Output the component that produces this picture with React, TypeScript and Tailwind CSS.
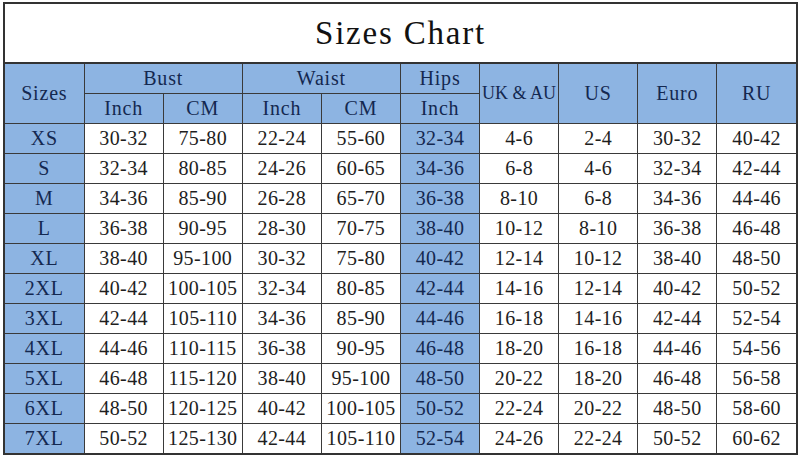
import React from "react"

// --------------------
// Size data
// --------------------
const rows: string[][] = [
  ["XS", "30-32", "75-80", "22-24", "55-60", "32-34", "4-6", "2-4", "30-32", "40-42"],
  ["S", "32-34", "80-85", "24-26", "60-65", "34-36", "6-8", "4-6", "32-34", "42-44"],
  ["M", "34-36", "85-90", "26-28", "65-70", "36-38", "8-10", "6-8", "34-36", "44-46"],
  ["L", "36-38", "90-95", "28-30", "70-75", "38-40", "10-12", "8-10", "36-38", "46-48"],
  ["XL", "38-40", "95-100", "30-32", "75-80", "40-42", "12-14", "10-12", "38-40", "48-50"],
  ["2XL", "40-42", "100-105", "32-34", "80-85", "42-44", "14-16", "12-14", "40-42", "50-52"],
  ["3XL", "42-44", "105-110", "34-36", "85-90", "44-46", "16-18", "14-16", "42-44", "52-54"],
  ["4XL", "44-46", "110-115", "36-38", "90-95", "46-48", "18-20", "16-18", "44-46", "54-56"],
  ["5XL", "46-48", "115-120", "38-40", "95-100", "48-50", "20-22", "18-20", "46-48", "56-58"],
  ["6XL", "48-50", "120-125", "40-42", "100-105", "50-52", "22-24", "20-22", "48-50", "58-60"],
  ["7XL", "50-52", "125-130", "42-44", "105-110", "52-54", "24-26", "22-24", "50-52", "60-62"],
]

const head = "border border-[#3a3a3a] bg-[#8db4e2] text-[#142850] text-center align-middle p-0 tracking-[0.8px] whitespace-nowrap"
const cell = "border border-[#3a3a3a] text-center align-middle p-0 text-[#1e1e1e] tracking-[0.4px] whitespace-nowrap"

export default function App() {
  return (
    <div className="w-[800px] h-[459px] bg-white pt-[2px] pl-[3px]">
      <div
        className="w-[795px] border-2 border-[#333] text-[20px] leading-none"
        style={{ fontFamily: '"Liberation Serif", "Times New Roman", serif' }}
      >
        {/* Title */}
        <div className="h-[60px] flex items-center justify-center text-[33px] tracking-[1.8px] text-[#111] border-b-2 border-[#333]">
          Sizes Chart
        </div>

        {/* Table */}
        <table className="w-full table-fixed border-collapse border-hidden">
          <tbody>
            <tr className="h-[29px]">
              <td rowSpan={2} className={head}>Sizes</td>
              <td colSpan={2} className={head}>Bust</td>
              <td colSpan={2} className={head}>Waist</td>
              <td className={head}>Hips</td>
              <td rowSpan={2} className={head + " text-[18px] tracking-[0px]"}>UK &amp; AU</td>
              <td rowSpan={2} className={head}>US</td>
              <td rowSpan={2} className={head}>Euro</td>
              <td rowSpan={2} className={head}>RU</td>
            </tr>
            <tr className="h-[30px]">
              <td className={head}>Inch</td>
              <td className={head}>CM</td>
              <td className={head}>Inch</td>
              <td className={head}>CM</td>
              <td className={head}>Inch</td>
            </tr>
            {rows.map((r) => (
              <tr key={r[0]} className="h-[30px]">
                {r.map((v, i) => (
                  <td
                    key={i}
                    className={
                      i === 0
                        ? head
                        : i === 5
                        ? cell + " bg-[#8db4e2] text-[#142850]"
                        : cell + " bg-white"
                    }
                  >
                    {v}
                  </td>
                ))}
              </tr>
            ))}
          </tbody>
        </table>
      </div>
    </div>
  )
}
